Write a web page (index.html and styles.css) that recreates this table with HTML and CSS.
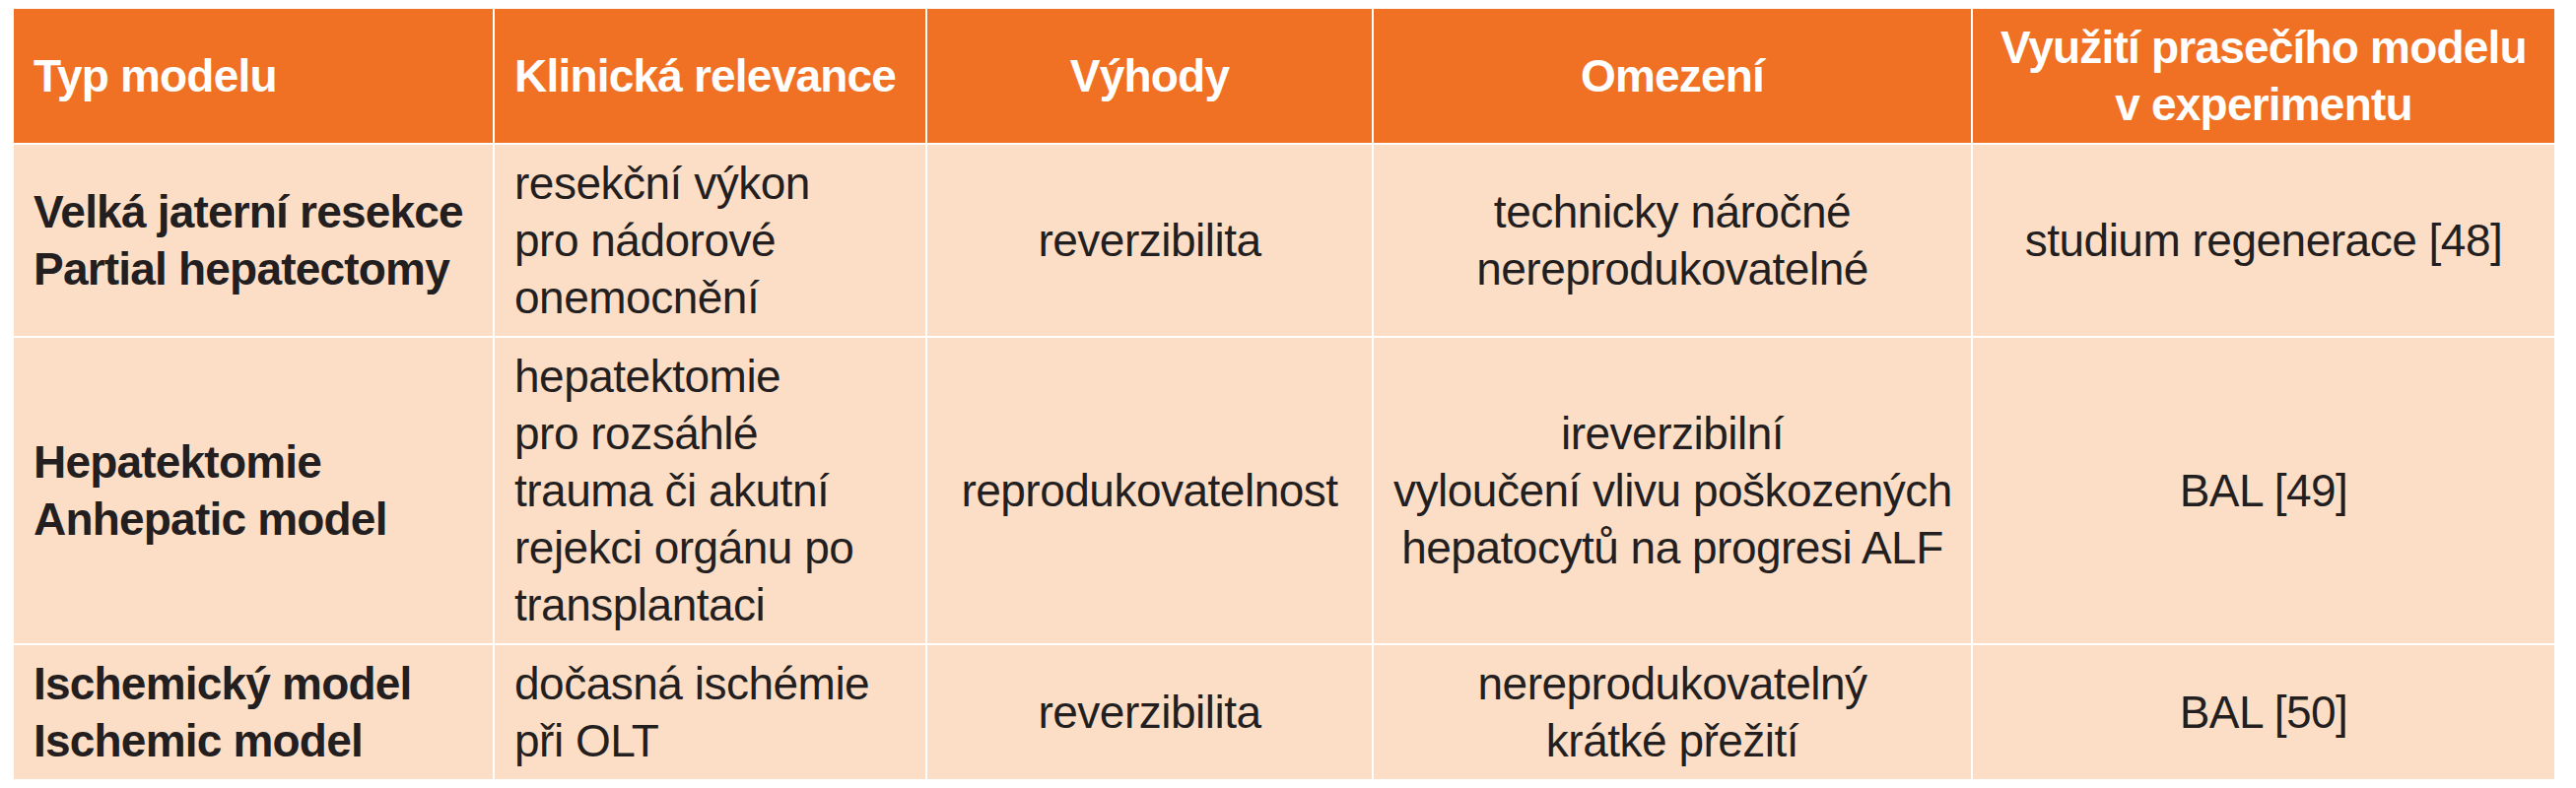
FILE: index.html
```html
<!DOCTYPE html>
<html lang="cs">
<head>
<meta charset="utf-8">
<title>Modely selhání jater</title>
<link rel="stylesheet" href="styles.css">
</head>
<body>
<table class="models">
  <colgroup>
    <col class="c-type">
    <col class="c-clin">
    <col class="c-adv">
    <col class="c-lim">
    <col class="c-use">
  </colgroup>
  <thead>
    <tr>
      <th class="left">Typ modelu</th>
      <th class="left">Klinická relevance</th>
      <th>Výhody</th>
      <th>Omezení</th>
      <th>Využití prasečího modelu<br>v experimentu</th>
    </tr>
  </thead>
  <tbody>
    <tr>
      <td class="name">Velká jaterní resekce<br>Partial hepatectomy</td>
      <td class="left">resekční výkon<br>pro nádorové<br>onemocnění</td>
      <td>reverzibilita</td>
      <td>technicky náročné<br>nereprodukovatelné</td>
      <td>studium regenerace [48]</td>
    </tr>
    <tr>
      <td class="name">Hepatektomie<br>Anhepatic model</td>
      <td class="left">hepatektomie<br>pro rozsáhlé<br>trauma či akutní<br>rejekci orgánu po<br>transplantaci</td>
      <td>reprodukovatelnost</td>
      <td>ireverzibilní<br>vyloučení vlivu poškozených<br>hepatocytů na progresi ALF</td>
      <td>BAL [49]</td>
    </tr>
    <tr>
      <td class="name">Ischemický model<br>Ischemic model</td>
      <td class="left">dočasná ischémie<br>při OLT</td>
      <td>reverzibilita</td>
      <td>nereprodukovatelný<br>krátké přežití</td>
      <td>BAL [50]</td>
    </tr>
  </tbody>
</table>
</body>
</html>
```

FILE: styles.css
```css
html, body {
  background: #ffffff;
}

body {
  margin: 7px 0 0 12px;
  font-family: "Liberation Sans", Arial, sans-serif;
  color: #231f20;
}

.models {
  border-collapse: collapse;
  table-layout: fixed;
  width: 2580px;
}

.c-type { width: 488px; }
.c-clin { width: 439px; }
.c-adv  { width: 453px; }
.c-lim  { width: 608px; }
.c-use  { width: 592px; }

.models th,
.models td {
  border: 2px solid #ffffff;
  padding: 10px 20px;
  font-size: 46px;
  line-height: 58px;
  text-align: center;
  vertical-align: middle;
  letter-spacing: -0.5px;
  white-space: nowrap;
}

.models th {
  background: #f17124;
  color: #ffffff;
  font-weight: 700;
  letter-spacing: -0.8px;
}

.models td {
  background: #fcdec7;
  font-weight: 400;
}

.models th.left,
.models td.left {
  text-align: left;
}

.models td.name {
  text-align: left;
  font-weight: 700;
  letter-spacing: -0.8px;
}
```
